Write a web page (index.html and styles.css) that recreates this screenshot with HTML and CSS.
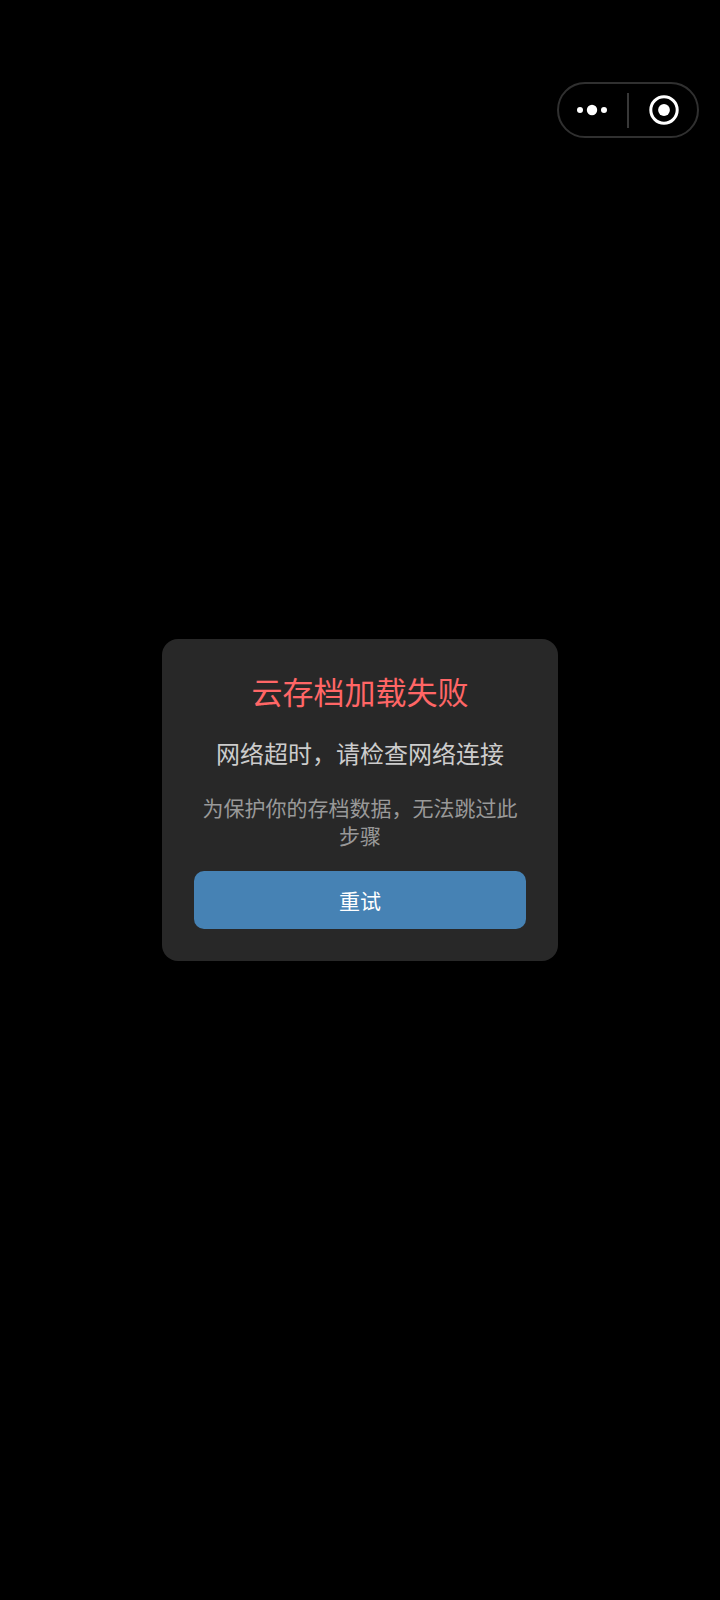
FILE: index.html
```html
<!DOCTYPE html>
<html lang="zh-CN">

<head>
  <meta charset="UTF-8">
  <meta name="viewport" content="width=device-width, initial-scale=1.0">
  <title>云存档加载失败</title>
  <link rel="stylesheet" href="styles.css">
</head>

<body>
  <div class="capsule">
    <button class="capsule-button" type="button" aria-label="更多">
      <svg width="30" height="30" viewBox="0 0 30 30" fill="#fff">
        <circle cx="3" cy="15" r="3" />
        <circle cx="15" cy="15" r="5.2" />
        <circle cx="27" cy="15" r="3" />
      </svg>
    </button>
    <span class="capsule-line"></span>
    <button class="capsule-button" type="button" aria-label="关闭">
      <svg width="30" height="30" viewBox="0 0 30 30">
        <circle cx="15" cy="15" r="13.2" fill="none" stroke="#fff" stroke-width="3" />
        <circle cx="15" cy="15" r="5.9" fill="#fff" />
      </svg>
    </button>
  </div>

  <main class="screen">
    <div class="dialog" role="alertdialog" aria-labelledby="title" aria-describedby="message">
      <h1 class="title" id="title">云存档加载失败</h1>
      <p class="message" id="message">网络超时，请检查网络连接</p>
      <p class="hint">为保护你的存档数据，无法跳过此步骤</p>
      <button class="retry" type="button">重试</button>
    </div>
  </main>
</body>

</html>
```

FILE: styles.css
```css
* {
  box-sizing: border-box;
}

body {
  margin: 0;
  background-color: #000;
  font-family: "Noto Sans CJK SC", sans-serif;
  font-weight: 400;
}

button {
  padding: 0;
  border: none;
  font: inherit;
  cursor: pointer;
}

/* floats above the page, top right */
.capsule {
  position: absolute;
  top: 82px;
  right: 21px;
  display: flex;
  align-items: center;
  justify-content: space-between;
  width: 142px;
  height: 56px;
  padding: 0 18px;
  border: 2px solid #303030;
  border-radius: 28px;
}

.capsule-button {
  display: flex;
  align-items: center;
  height: 100%;
  background: none;
}

.capsule-line {
  width: 2px;
  height: 35px;
  background-color: #383838;
}

.screen {
  display: flex;
  align-items: center;
  justify-content: center;
  min-height: 100vh;
}

.dialog {
  width: 55%;
  padding: 32px;
  background-color: #282828;
  border-radius: 16px;
  text-align: center;
}

.title {
  margin: 0 0 24px;
  color: #ff6666;
  font-size: 31px;
  font-weight: inherit;
  line-height: 40px;
}

.message {
  margin: 0 0 22px;
  color: #ccc;
  font-size: 24px;
  line-height: 36px;
}

.hint {
  margin: 0 0 22px;
  color: #999;
  font-size: 21px;
  line-height: 28px;
}

.retry {
  display: block;
  width: 100%;
  height: 58px;
  background-color: #4682b4;
  border-radius: 10px;
  color: #fff;
  font-size: 21px;
}
```
